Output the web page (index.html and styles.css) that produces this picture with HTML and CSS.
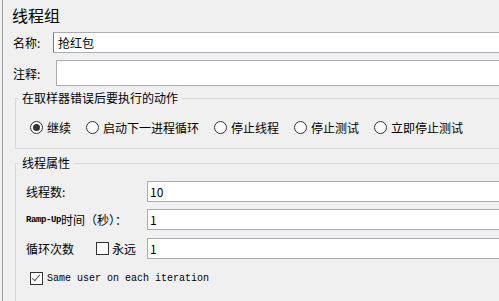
FILE: index.html
```html
<!DOCTYPE html>
<html lang="zh-CN">
<head>
  <meta charset="UTF-8">
  <title>线程组</title>
  <link rel="stylesheet" href="styles.css">
</head>
<body>
  <div class="panel">
    <h1>线程组</h1>

    <div class="row name-row">
      <label for="nameInput">名称:</label>
      <input type="text" id="nameInput" value="抢红包">
    </div>
    <div class="row comment-row">
      <label for="commentInput">注释:</label>
      <input type="text" id="commentInput">
    </div>

    <fieldset class="group on-error">
      <legend>在取样器错误后要执行的动作</legend>
      <div class="radios">
        <label class="opt"><input type="radio" name="onError" checked>继续</label>
        <label class="opt"><input type="radio" name="onError">启动下一进程循环</label>
        <label class="opt"><input type="radio" name="onError">停止线程</label>
        <label class="opt"><input type="radio" name="onError">停止测试</label>
        <label class="opt"><input type="radio" name="onError">立即停止测试</label>
      </div>
    </fieldset>

    <fieldset class="group props">
      <legend>线程属性</legend>
      <div class="field">
        <div class="field-label">线程数:</div>
        <input type="text" value="10">
      </div>
      <div class="field">
        <div class="field-label"><span class="mono-sm">Ramp-Up</span>时间（秒）：</div>
        <input type="text" value="1">
      </div>
      <div class="field loops">
        <div class="field-label">
          <span>循环次数</span>
          <label class="forever"><input type="checkbox">永远</label>
        </div>
        <input type="text" value="1">
      </div>
      <label class="same-user"><input type="checkbox" checked>Same user on each iteration</label>
    </fieldset>
  </div>
</body>
</html>
```

FILE: styles.css
```css
body {
  margin: 0;
  height: 301px;
  overflow: hidden;
  background: #f0f0f0;
  font-family: "Noto Sans CJK SC", "Microsoft YaHei", sans-serif;
  font-size: 12px;
  color: #000;
}
.panel {
  margin-left: 2px;
  border-left: 1px solid #a0a0a0;
  width: 560px;
  height: 301px;
}
h1 {
  margin: 0;
  padding: 5px 0 0 9px;
  font-size: 16px;
  font-weight: normal;
  line-height: 20px;
}
.row {
  display: flex;
  align-items: center;
  margin-top: 7px;
  padding-left: 10px;
}
.row label {
  width: 40px;
}
.comment-row label {
  width: 43px;
}
input[type="text"] {
  flex: 1;
  min-width: 0;
  height: 21px;
  box-sizing: border-box;
  margin: 0;
  padding: 0 2px;
  border: 1px solid #abadb3;
  background: #fff;
  font: 12px "Noto Sans CJK SC", sans-serif;
  color: #000;
  outline: none;
}
.name-row input {
  padding-left: 4px;
  border-left-color: #7a7a7a;
}
.comment-row input {
  height: 26px;
}
.group {
  margin: 5px 0 0 12px;
  padding: 0 0 14px 2px;
  border: 1px solid #d9d9d9;
  min-width: 0;
}
.group legend {
  padding: 0 4px;
  line-height: 14px;
}
.radios {
  display: flex;
  gap: 15px;
  margin-top: 16px;
  padding-left: 12px;
}
.opt {
  display: flex;
  align-items: center;
  gap: 4px;
  line-height: 13px;
}
input[type="radio"] {
  appearance: none;
  width: 13px;
  height: 13px;
  margin: 0;
  border: 1px solid #333;
  border-radius: 50%;
  background: #fff;
  display: grid;
  place-content: center;
}
input[type="radio"]:checked::before {
  content: "";
  width: 7px;
  height: 7px;
  border-radius: 50%;
  background: #333;
}
input[type="checkbox"] {
  appearance: none;
  width: 13px;
  height: 13px;
  margin: 0;
  border: 1px solid #333;
  background: #fff;
  position: relative;
}
input[type="checkbox"]:checked::before {
  content: "";
  position: absolute;
  left: 3px;
  top: 0;
  width: 3px;
  height: 7px;
  border: solid #555;
  border-width: 0 1.5px 1.5px 0;
  transform: rotate(40deg);
}
.props {
  margin-top: 7px;
  padding-bottom: 60px;
}
.field {
  display: flex;
  align-items: center;
  margin-top: 7px;
  padding-left: 8px;
}
.field:first-of-type {
  margin-top: 11px;
}
.field.loops {
  margin-top: 8px;
}
.field-label {
  width: 121px;
  display: flex;
  align-items: center;
}
.mono-sm {
  font-family: "Liberation Mono", monospace;
  font-size: 9px;
  font-weight: bold;
  letter-spacing: -0.4px;
}
.forever {
  display: flex;
  align-items: center;
  gap: 3px;
  margin-left: 22px;
}
.same-user {
  display: flex;
  align-items: center;
  gap: 4px;
  margin-top: 13px;
  padding-left: 12px;
  font-family: "Liberation Mono", monospace;
  font-size: 10px;
  line-height: 13px;
}
```
